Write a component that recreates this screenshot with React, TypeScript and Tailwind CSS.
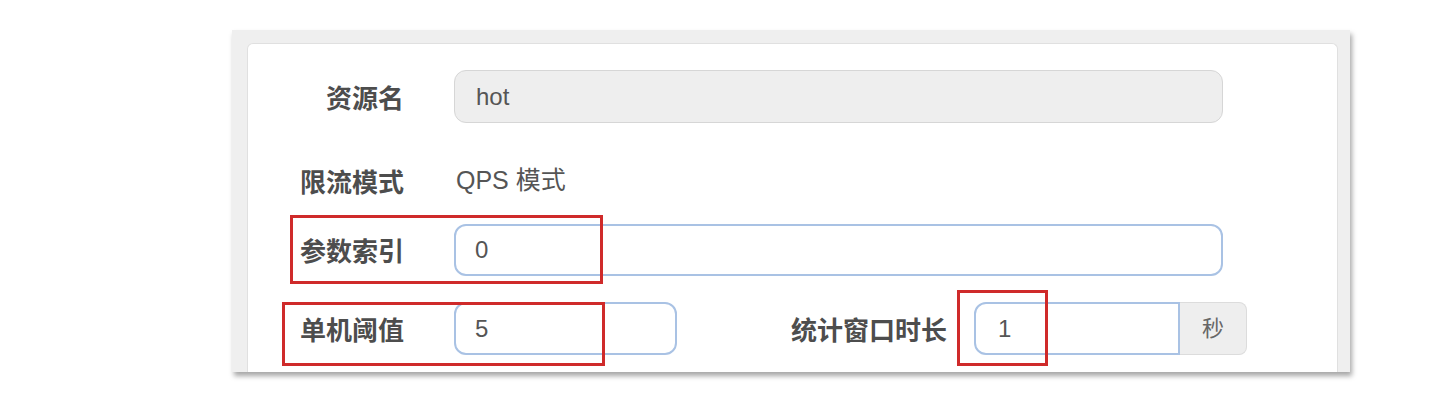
const font = { fontFamily: '"Liberation Sans", "Noto Sans CJK SC", sans-serif' }

function Label({ children, className = '' }: { children: React.ReactNode; className?: string }) {
  return (
    <div className={`shrink-0 pt-[5px] text-right text-[26px] font-bold text-[#4d4d4d] ${className}`}>
      {children}
    </div>
  )
}

export default function App() {
  return (
    <div className="h-[400px] w-[1450px] bg-white pt-[30px]" style={font}>
      {/* outer gray frame */}
      <div className="ml-[232px] h-[342px] w-[1118px] bg-[#efefef] pl-[15px] pr-[12px] pt-[13px] shadow-[2px_4px_5px_rgba(0,0,0,0.35)]">
        {/* inner white panel */}
        <div className="relative h-full rounded-t-[6px] border border-b-0 border-[#e0e0e0] bg-white pt-[26px]">
          {/* row: 资源名 */}
          <div className="flex h-[53px] items-center">
            <Label className="w-[156px]">资源名</Label>
            <div className="ml-[50px] flex h-[53px] w-[769px] items-center rounded-[12px] border border-[#d6d6d6] bg-[#eeeeee] px-[21px] text-[24px] text-[#555]">
              hot
            </div>
          </div>

          {/* row: 限流模式 */}
          <div className="mt-[32px] flex h-[52px] items-center">
            <Label className="w-[156px]">限流模式</Label>
            <div className="ml-[52px] text-[25px] text-[#555]">QPS 模式</div>
          </div>

          {/* row: 参数索引 */}
          <div className="mt-[17px] flex h-[52px] items-center">
            <Label className="w-[156px]">参数索引</Label>
            <div className="ml-[50px] flex h-[52px] w-[769px] items-center rounded-[12px] border-2 border-[#a9c2e4] bg-white px-[19px] text-[24px] text-[#555]">
              0
            </div>
          </div>

          {/* row: 单机阈值 / 统计窗口时长 */}
          <div className="mt-[26px] flex h-[53px] items-center">
            <Label className="w-[156px]">单机阈值</Label>
            <div className="ml-[50px] flex h-[53px] w-[223px] items-center rounded-[12px] border-2 border-[#a9c2e4] bg-white px-[19px] text-[24px] text-[#555]">
              5
            </div>
            <Label className="w-[270px]">统计窗口时长</Label>
            <div className="ml-[27px] flex h-[53px]">
              <div className="flex w-[206px] items-center rounded-l-[12px] border-2 border-[#a9c2e4] bg-white px-[22px] text-[24px] text-[#555]">
                1
              </div>
              <div className="flex w-[67px] items-center justify-center rounded-r-[8px] border border-l-0 border-[#dcdcdc] bg-[#eeeeee] text-[22px] text-[#666]">
                秒
              </div>
            </div>
          </div>

          {/* red annotation boxes */}
          <div className="absolute left-[42px] top-[171px] h-[69px] w-[313px] border-[3px] border-[#cf2a2a]" />
          <div className="absolute left-[34px] top-[258px] h-[64px] w-[323px] border-[3px] border-[#cf2a2a]" />
          <div className="absolute left-[709px] top-[246px] h-[76px] w-[91px] border-[3px] border-[#cf2a2a]" />
        </div>
      </div>
    </div>
  )
}
